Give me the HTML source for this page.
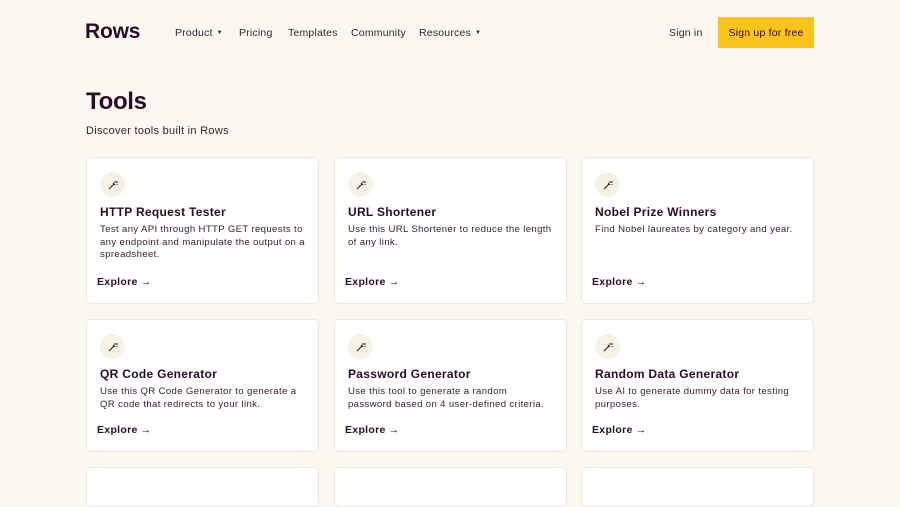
<!DOCTYPE html>
<html><head><meta charset="utf-8"><style>
*{margin:0;padding:0;box-sizing:border-box}
body{width:900px;height:484px;overflow:hidden;background:#fbf8f1;font-family:"Liberation Sans",sans-serif;color:#2c0b25;position:relative}
.logo{position:absolute;left:85px;top:20px;font-size:21px;font-weight:bold;letter-spacing:-0.2px}
.nav{position:absolute;top:27px;font-size:10.5px;color:#3a2034;letter-spacing:0.2px}
.nav small{font-size:6px;vertical-align:2px;margin-left:4px}
.btn{position:absolute;left:718px;top:17px;width:96px;height:31px;background:#fcc419;font-size:10.5px;display:flex;align-items:center;justify-content:center;color:#2c0b25;letter-spacing:0.2px}
h1{position:absolute;left:86px;top:88px;font-size:24px;font-weight:bold;letter-spacing:-0.3px}
.sub{position:absolute;left:86px;top:125px;font-size:11px;color:#3a2034;letter-spacing:0.3px}
.card{position:absolute;background:#fff;border:1px solid #ede8dc;border-radius:5px;width:233px}
.ic{position:absolute;left:13px;top:14px;width:25px;height:25px;border-radius:50%;background:#f7f2e6;display:flex;align-items:center;justify-content:center}
.t{position:absolute;left:13px;top:47px;font-size:12px;font-weight:bold;letter-spacing:0.3px}
.d{position:absolute;left:13px;top:66px;width:205px;font-size:9.6px;line-height:12.5px;color:#3a2034;letter-spacing:0.35px}
.e{position:absolute;left:10px;font-size:10.5px;font-weight:bold;letter-spacing:0.3px}
.e span{font-weight:normal;margin-left:3px}
</style></head><body>
<div class="logo">Rows</div>
<div class="nav" style="left:175px">Product<small>▼</small></div>
<div class="nav" style="left:239px">Pricing</div>
<div class="nav" style="left:288px">Templates</div>
<div class="nav" style="left:351px">Community</div>
<div class="nav" style="left:419px">Resources<small>▼</small></div>
<div class="nav" style="left:669px">Sign in</div>
<div class="btn">Sign up for free</div>
<h1>Tools</h1>
<div class="sub">Discover tools built in Rows</div>

<div class="card" style="left:86px;top:157px;height:147px"><div class="ic"><svg width="10" height="10" viewBox="0 0 10 10" fill="none" stroke="#2c0b25" stroke-width="1"><path d="M1 9L6 4M5 3l2 2M7 1v2M8 2h2M9 4v1"/></svg></div><div class="t">HTTP Request Tester</div><div class="d">Test any API through HTTP GET requests to any endpoint and manipulate the output on a spreadsheet.</div><div class="e" style="top:118px">Explore<span>→</span></div></div>
<div class="card" style="left:334px;top:157px;height:147px"><div class="ic"><svg width="10" height="10" viewBox="0 0 10 10" fill="none" stroke="#2c0b25" stroke-width="1"><path d="M1 9L6 4M5 3l2 2M7 1v2M8 2h2M9 4v1"/></svg></div><div class="t">URL Shortener</div><div class="d">Use this URL Shortener to reduce the length of any link.</div><div class="e" style="top:118px">Explore<span>→</span></div></div>
<div class="card" style="left:581px;top:157px;height:147px"><div class="ic"><svg width="10" height="10" viewBox="0 0 10 10" fill="none" stroke="#2c0b25" stroke-width="1"><path d="M1 9L6 4M5 3l2 2M7 1v2M8 2h2M9 4v1"/></svg></div><div class="t">Nobel Prize Winners</div><div class="d">Find Nobel laureates by category and year.</div><div class="e" style="top:118px">Explore<span>→</span></div></div>

<div class="card" style="left:86px;top:319px;height:133px"><div class="ic"><svg width="10" height="10" viewBox="0 0 10 10" fill="none" stroke="#2c0b25" stroke-width="1"><path d="M1 9L6 4M5 3l2 2M7 1v2M8 2h2M9 4v1"/></svg></div><div class="t">QR Code Generator</div><div class="d">Use this QR Code Generator to generate a QR code that redirects to your link.</div><div class="e" style="top:104px">Explore<span>→</span></div></div>
<div class="card" style="left:334px;top:319px;height:133px"><div class="ic"><svg width="10" height="10" viewBox="0 0 10 10" fill="none" stroke="#2c0b25" stroke-width="1"><path d="M1 9L6 4M5 3l2 2M7 1v2M8 2h2M9 4v1"/></svg></div><div class="t">Password Generator</div><div class="d">Use this tool to generate a random password based on 4 user-defined criteria.</div><div class="e" style="top:104px">Explore<span>→</span></div></div>
<div class="card" style="left:581px;top:319px;height:133px"><div class="ic"><svg width="10" height="10" viewBox="0 0 10 10" fill="none" stroke="#2c0b25" stroke-width="1"><path d="M1 9L6 4M5 3l2 2M7 1v2M8 2h2M9 4v1"/></svg></div><div class="t">Random Data Generator</div><div class="d">Use AI to generate dummy data for testing purposes.</div><div class="e" style="top:104px">Explore<span>→</span></div></div>

<div class="card" style="left:86px;top:467px;height:40px"></div>
<div class="card" style="left:334px;top:467px;height:40px"></div>
<div class="card" style="left:581px;top:467px;height:40px"></div>
</body></html>
